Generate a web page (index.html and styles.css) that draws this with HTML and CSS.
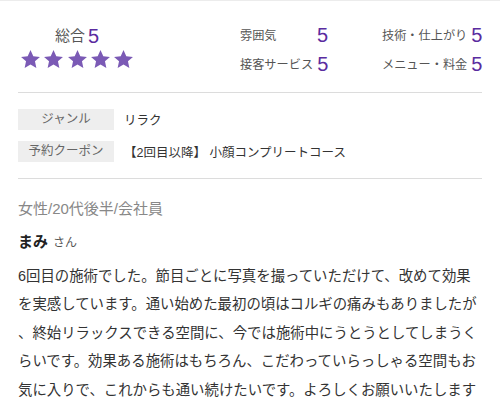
FILE: index.html
```html
<!DOCTYPE html>
<html lang="ja">
<head>
<meta charset="utf-8">
<link rel="stylesheet" href="styles.css">
</head>
<body>
<div class="page">
  <section class="ratings">
    <div class="overall">
      <div class="overall-title">総合<span class="score big">5</span></div>
      <div class="stars">
        <svg viewBox="0 0 24 24"><path d="M12 1.2l3.2 7 7.6.8-5.7 5.1 1.6 7.5L12 17.8l-6.7 3.8 1.6-7.5L1.2 9l7.6-.8z"/></svg>
        <svg viewBox="0 0 24 24"><path d="M12 1.2l3.2 7 7.6.8-5.7 5.1 1.6 7.5L12 17.8l-6.7 3.8 1.6-7.5L1.2 9l7.6-.8z"/></svg>
        <svg viewBox="0 0 24 24"><path d="M12 1.2l3.2 7 7.6.8-5.7 5.1 1.6 7.5L12 17.8l-6.7 3.8 1.6-7.5L1.2 9l7.6-.8z"/></svg>
        <svg viewBox="0 0 24 24"><path d="M12 1.2l3.2 7 7.6.8-5.7 5.1 1.6 7.5L12 17.8l-6.7 3.8 1.6-7.5L1.2 9l7.6-.8z"/></svg>
        <svg viewBox="0 0 24 24"><path d="M12 1.2l3.2 7 7.6.8-5.7 5.1 1.6 7.5L12 17.8l-6.7 3.8 1.6-7.5L1.2 9l7.6-.8z"/></svg>
      </div>
    </div>
    <div class="details">
      <div class="item c1"><span class="lbl">雰囲気</span><span class="score">5</span></div>
      <div class="item c2"><span class="lbl">技術・仕上がり</span><span class="score">5</span></div>
      <div class="item c1"><span class="lbl">接客サービス</span><span class="score">5</span></div>
      <div class="item c2"><span class="lbl">メニュー・料金</span><span class="score">5</span></div>
    </div>
  </section>
  <hr class="divider">
  <section class="info">
    <div class="row"><span class="tag">ジャンル</span><span class="val">リラク</span></div>
    <div class="row"><span class="tag">予約クーポン</span><span class="val">【2回目以降】 小顔コンプリートコース</span></div>
  </section>
  <hr class="divider">
  <section class="review">
    <div class="meta">女性/20代後半/会社員</div>
    <div class="name">まみ<span class="san">さん</span></div>
    <p class="body">6回目の施術でした。節目ごとに写真を撮っていただけて、改めて効果を実感しています。通い始めた最初の頃はコルギの痛みもありましたが、終始リラックスできる空間に、今では施術中にうとうとしてしまうくらいです。効果ある施術はもちろん、こだわっていらっしゃる空間もお気に入りで、これからも通い続けたいです。よろしくお願いいたします</p>
  </section>
</div>
</body>
</html>
```
FILE: styles.css
```css
html, body {
  margin: 0;
  padding: 0;
  background: #fff;
}
body {
  font-family: "Liberation Sans", "Noto Sans CJK JP", sans-serif;
  color: #333;
  overflow: hidden;
}
.page {
  border-top: 1px solid #ececec;
  width: 500px;
  height: 399px;
  overflow: hidden;
}
.ratings {
  display: flex;
  align-items: flex-start;
  height: 91px;
  padding: 0 18px;
  box-sizing: border-box;
}
.overall {
  width: 118px;
  margin-top: 24px;
  display: flex;
  flex-direction: column;
  align-items: center;
}
.overall-title {
  font-size: 15px;
  line-height: 22px;
  color: #555;
  display: flex;
  align-items: center;
}
.score {
  color: #5a2ca0;
  font-size: 20px;
  line-height: 22px;
  font-family: "Liberation Sans", sans-serif;
}
.score.big {
  margin-left: 3px;
}
.stars {
  display: flex;
  gap: 2.3px;
  margin-top: 2px;
}
.stars svg {
  width: 21px;
  height: 21px;
  fill: #7b5ab5;
}
.details {
  margin-left: 104px;
  margin-top: 19px;
  display: grid;
  grid-template-columns: 88px 98px;
  column-gap: 54px;
  grid-auto-rows: 29px;
}
.item {
  display: flex;
  align-items: center;
  justify-content: space-between;
  gap: 4px;
  white-space: nowrap;
}
.lbl {
  font-size: 12.2px;
  color: #555;
  white-space: nowrap;
}
.divider {
  margin: 0 18px 0 18px;
  border: 0;
  border-top: 1px solid #dcdcdc;
  height: 0;
}
.info {
  padding: 16px 18px 16px;
  display: flex;
  flex-direction: column;
  gap: 11px;
}
.row {
  display: flex;
  align-items: center;
  height: 21px;
}
.tag {
  width: 96px;
  height: 21px;
  line-height: 21px;
  background: #eeeeee;
  color: #666;
  font-size: 12.5px;
  text-align: center;
}
.val {
  margin-left: 10px;
  font-size: 12.5px;
  color: #333;
}
.review {
  padding: 20px 18px 0;
}
.meta {
  font-size: 15px;
  line-height: 20px;
  color: #888;
}
.name {
  margin-top: 13px;
  font-size: 15px;
  line-height: 20px;
  font-weight: bold;
  color: #222;
}
.san {
  font-size: 12px;
  font-weight: normal;
  color: #555;
  margin-left: 5px;
}
.body {
  margin: 9px 0 0;
  font-size: 14.4px;
  line-height: 28.4px;
  color: #333;
  line-break: anywhere;
}
```
